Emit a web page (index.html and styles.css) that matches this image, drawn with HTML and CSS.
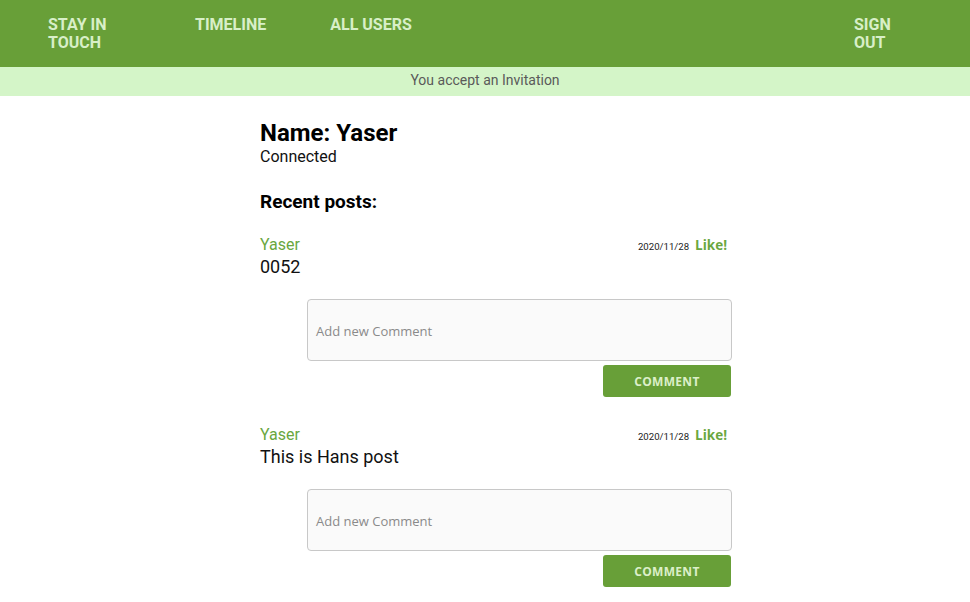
FILE: index.html
```html
<!DOCTYPE html>
<html>
<head>
<meta charset="utf-8">
<link rel="stylesheet" href="styles.css">
</head>
<body>
<nav class="nav">
  <a class="nav-item brand">STAY IN TOUCH</a>
  <a class="nav-item timeline">TIMELINE</a>
  <a class="nav-item users">ALL USERS</a>
  <a class="nav-item signout">SIGN OUT</a>
</nav>
<div class="notice">You accept an Invitation</div>
<main class="content">
  <h1 class="name">Name: Yaser</h1>
  <div class="status">Connected</div>
  <h2 class="recent">Recent posts:</h2>

  <div class="post">
    <div class="post-head">
      <span class="author">Yaser</span>
      <span class="meta"><span class="date">2020/11/28</span><a class="like">Like!</a></span>
    </div>
    <div class="post-body">0052</div>
    <form class="comment-form">
      <textarea class="comment-input" placeholder="Add new Comment"></textarea>
      <button type="button" class="comment-btn">COMMENT</button>
    </form>
  </div>

  <div class="post">
    <div class="post-head">
      <span class="author">Yaser</span>
      <span class="meta"><span class="date">2020/11/28</span><a class="like">Like!</a></span>
    </div>
    <div class="post-body">This is Hans post</div>
    <form class="comment-form">
      <textarea class="comment-input" placeholder="Add new Comment"></textarea>
      <button type="button" class="comment-btn">COMMENT</button>
    </form>
  </div>
</main>
</body>
</html>
```

FILE: styles.css
```css
* { box-sizing: border-box; }
html, body { margin: 0; padding: 0; background: #fff; }
body { font-family: Roboto, "Liberation Sans", sans-serif; color: #111; }

.nav {
  height: 67px;
  background: #689f38;
  display: flex;
  align-items: flex-start;
  padding: 16px 0 0 48px;
}
.nav-item {
  color: #d8efc8;
  font-weight: 700;
  font-size: 16px;
  line-height: 18px;
  display: block;
}
.brand { width: 66px; margin-right: 81px; }
.timeline { margin-right: 64px; }
.signout { margin-left: auto; width: 40px; margin-right: 76px; }

.notice {
  background: #d4f5c8;
  height: 29px;
  line-height: 27px;
  text-align: center;
  font-size: 14px;
  color: #5a5a5a;
}

.content {
  width: 471px;
  margin-left: 260px;
  padding-top: 23px;
}
.name {
  margin: 0;
  font-size: 24px;
  line-height: 29px;
  font-weight: 700;
  color: #000;
}
.status {
  font-size: 16px;
  line-height: 18px;
  color: #111;
}
.recent {
  margin: 25px 0 0 0;
  font-size: 19px;
  line-height: 22px;
  font-weight: 700;
  color: #000;
}
.post { padding-top: 22px; }
.post + .post { padding-top: 28px; }
.post-head {
  display: flex;
  justify-content: space-between;
  align-items: baseline;
}
.author {
  color: #6aa73f;
  font-size: 16px;
  line-height: 20px;
}
.meta { display: flex; align-items: baseline; padding-right: 4px; }
.date {
  font-size: 9.6px;
  color: #222;
  margin-right: 6px;
}
.like {
  font-family: "Open Sans", sans-serif;
  font-weight: 700;
  font-size: 13.5px;
  color: #6aa73f;
}
.post-body {
  font-size: 18px;
  line-height: 24px;
  color: #111;
}
.comment-form {
  display: flex;
  flex-direction: column;
  align-items: flex-end;
  padding-top: 20px;
  gap: 4px;
}
.comment-input {
  display: block;
  width: 425px;
  height: 62px;
  border: 1px solid #c8c8c8;
  border-radius: 4px;
  background: #fafafa;
  resize: none;
  padding: 22px 8px 0 8px;
  font-family: "Open Sans", sans-serif;
  font-size: 13px;
  line-height: 18px;
  margin-right: -1px;
}
.comment-input::placeholder { color: #8a8a8a; }
.comment-btn {
  width: 128px;
  height: 32px;
  border: none;
  border-radius: 3px;
  background: #689f38;
  color: #dcefc9;
  font-family: "Open Sans", sans-serif;
  font-weight: 700;
  font-size: 12px;
  letter-spacing: 0.3px;
  padding: 0;
}
```
